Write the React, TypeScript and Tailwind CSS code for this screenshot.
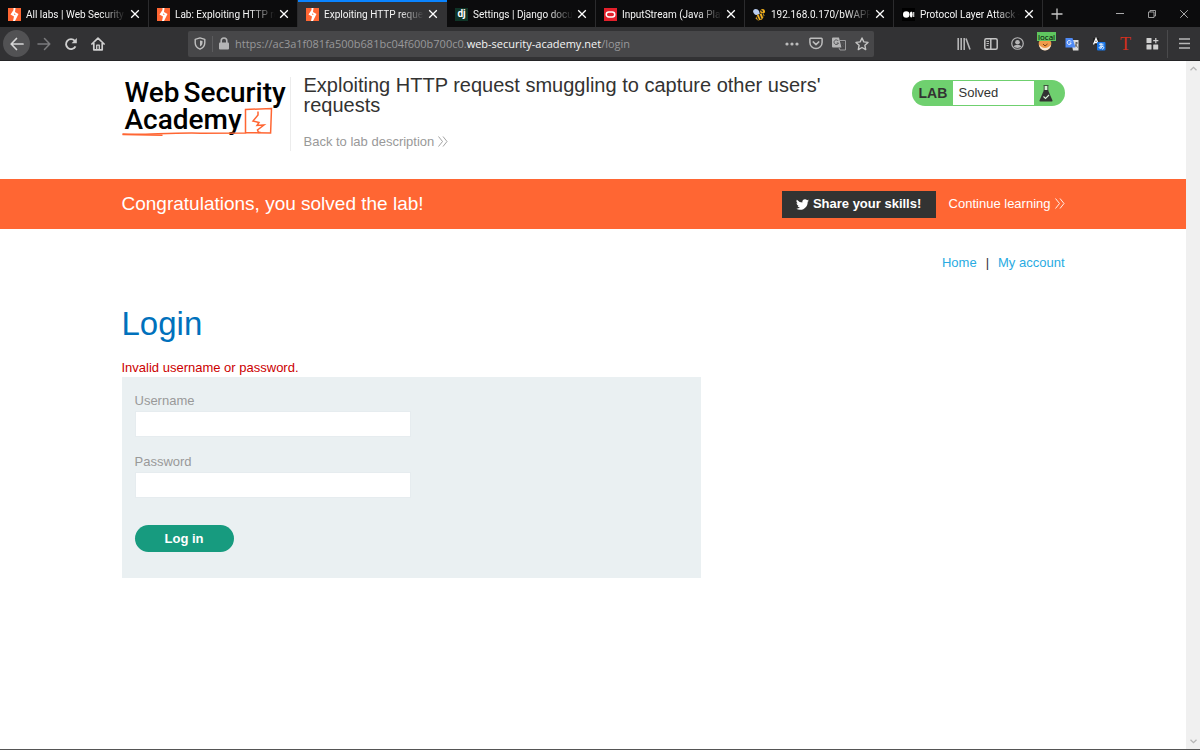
import React from 'react';

const BoltIcon = () => (
  <svg viewBox="0 0 26 26" className="size-[13px] shrink-0" aria-hidden="true">
    <rect width="26" height="26" fill="#ff6633" />
    <path d="M11 0h4l-1 8 7 4-7 14h-4l2-9-7-4 6-9z" fill="#fff" />
    <path d="M12.500 10.500l3 2.500-3 1z" fill="#ff6633" />
  </svg>
);

const DjangoIcon = () => (
  <span className="flex size-[13px] shrink-0 items-center justify-center bg-[#0f3528] text-[10px] leading-none font-bold text-white">dj</span>
);

const OracleIcon = () => (
  <svg viewBox="0 0 26 26" className="size-[13px] shrink-0" aria-hidden="true">
    <rect width="26" height="26" fill="#e3202b" />
    <rect x="4.500" y="8" width="17" height="10" rx="5" fill="none" stroke="#fff" strokeWidth="3" />
  </svg>
);

const BeeIcon = () => (
  <svg viewBox="0 0 26 26" className="size-[13px] shrink-0" aria-hidden="true">
    <path d="M1 4c3-4 9-2 11 2l2 7-8 1C2 13-1 8 1 4z" fill="#b9cdf0" />
    <path d="M16 3c5-3 9 1 8 6l-6 3-4-4z" fill="#f2b01e" />
    <path d="M9 13l11-3 3 5-5 8-8 2-5-4z" fill="#f2b01e" />
    <path d="M12 12l4 10M18 10l3 8M7 16l4 8M17 4l2 4" stroke="#222" strokeWidth="2.500" />
  </svg>
);

const MediumIcon = () => (
  <svg viewBox="0 0 26 26" className="size-[13px] shrink-0" aria-hidden="true">
    <rect width="26" height="26" fill="#000" />
    <circle cx="8.500" cy="13" r="6.500" fill="#fff" />
    <ellipse cx="18.500" cy="13" rx="2.800" ry="6" fill="#fff" />
    <rect x="22.500" y="8" width="2" height="10" fill="#fff" />
  </svg>
);

const tabs = [
  { icon: <BoltIcon />, title: 'All labs | Web Security' },
  { icon: <BoltIcon />, title: 'Lab: Exploiting HTTP re' },
  { icon: <BoltIcon />, title: 'Exploiting HTTP reques', active: true },
  { icon: <DjangoIcon />, title: 'Settings | Django docu' },
  { icon: <OracleIcon />, title: 'InputStream (Java Platf' },
  { icon: <BeeIcon />, title: '192.168.0.170/bWAPP/' },
  { icon: <MediumIcon />, title: 'Protocol Layer Attack -' },
];

function TabBar() {
  return (
    <div className="flex h-[27px] bg-[#0c0c0d] font-[Roboto,sans-serif] text-[10px] text-[#f5f5f5]">
      {tabs.map((tab) => (
        <div
          key={tab.title}
          className={
            tab.active
              ? 'flex w-[149px] items-center border-t-2 border-[#0a84ff] bg-[#323234] pr-[9px] pb-px pl-2'
              : 'flex w-[149px] items-center border-r border-[#2b2b2d] pt-px pr-2 pl-2'
          }
        >
          {tab.icon}
          <span className="ml-[5px] min-w-0 flex-1 overflow-hidden whitespace-nowrap [mask-image:linear-gradient(to_right,black_75%,transparent)]">
            {tab.title}
          </span>
          <button aria-label="Close tab" className="ml-1 shrink-0">
            <svg viewBox="0 0 10 10" className="size-[10px]" stroke="#fff" strokeWidth="1.300">
              <path d="M1.200 1.200l7.600 7.600M8.800 1.200L1.200 8.800" />
            </svg>
          </button>
        </div>
      ))}
      <button aria-label="New tab" className="flex w-7 items-center justify-center">
        <svg viewBox="0 0 12 12" className="size-3" stroke="#c8c8c8" strokeWidth="1.300">
          <path d="M6 0.500v11M0.500 6h11" />
        </svg>
      </button>
      <div className="ml-auto flex">
        <button aria-label="Minimize" className="flex w-8 items-center justify-center">
          <svg viewBox="0 0 8 8" className="size-2" stroke="#aaa"><path d="M0 3.500h8" /></svg>
        </button>
        <button aria-label="Restore" className="flex w-8 items-center justify-center">
          <svg viewBox="0 0 8 8" className="size-2" stroke="#aaa" strokeWidth="0.900" fill="none">
            <path d="M0.500 2h5.500v5.500H0.500zM2 2V0.500h5.500V6H6" />
          </svg>
        </button>
        <button aria-label="Close window" className="flex w-8 items-center justify-center">
          <svg viewBox="0 0 8 8" className="size-2" stroke="#bbb" strokeWidth="0.900"><path d="M0.200 0.200l7.600 7.600M7.800 0.200L0.200 7.800" /></svg>
        </button>
      </div>
    </div>
  );
}

function ToolButton({ label, className = '', children }: { label: string; className?: string; children: React.ReactNode }) {
  return (
    <button aria-label={label} className={`relative flex size-[27px] shrink-0 items-center justify-center rounded-full ${className}`}>
      {children}
    </button>
  );
}

function Toolbar() {
  return (
    <div className="flex h-[34px] items-center border-b border-[#242426] bg-[#323234] pl-[3px]">
      <ToolButton label="Back" className="bg-[#525254]">
        <svg viewBox="0 0 14 14" className="size-[14px]" fill="none" stroke="#d6d6d6" strokeWidth="1.700" strokeLinecap="round" strokeLinejoin="round">
          <path d="M13 7H1.200M6.500 1.500L1.200 7l5.300 5.500" />
        </svg>
      </ToolButton>
      <ToolButton label="Forward">
        <svg viewBox="0 0 14 14" className="size-[14px]" fill="none" stroke="#7b7b7d" strokeWidth="1.500" strokeLinecap="round" strokeLinejoin="round">
          <path d="M1 7h11.800M7.500 1.500L12.800 7l-5.300 5.500" />
        </svg>
      </ToolButton>
      <ToolButton label="Reload">
        <svg viewBox="0 0 14 14" className="size-[14px]" fill="none" stroke="#cfcfcf" strokeWidth="1.900">
          <path d="M11.500 9.300A5 5 0 1 1 10.800 3.800" />
          <path d="M12.800 1v5.200H7.600z" fill="#cfcfcf" stroke="none" />
        </svg>
      </ToolButton>
      <ToolButton label="Home">
        <svg viewBox="0 0 14 14" className="size-[14px]" fill="none" stroke="#cfcfcf" strokeWidth="1.700" strokeLinecap="round" strokeLinejoin="round">
          <path d="M0.900 7L7 1.200 13.100 7M2.800 6v6.800h8.400V6" />
          <path d="M5.700 12.500V8.200h2.600v4.300" strokeWidth="1.300" />
        </svg>
      </ToolButton>

      <div className="ml-[77px] flex h-[26px] min-w-0 flex-1 items-center rounded-xs bg-[#474749]">
        <span className="flex w-6 justify-center">
          <svg viewBox="0 0 12 13" className="h-[13px] w-3" fill="none" stroke="#c0c0c0" strokeWidth="1.400">
            <path d="M6 0.900L10.800 2.300v3.500c0 3-2 5.200-4.800 6.300C3.200 11 1.200 8.800 1.200 5.800V2.300z" strokeLinejoin="round" />
            <path d="M6 3.500v6c1.600-.8 2.500-2 2.500-3.700V4z" fill="#c0c0c0" stroke="none" />
          </svg>
        </span>
        <span className="h-4 w-px bg-[#5c5c5e]" />
        <svg viewBox="0 0 10 13" className="ml-[6px] h-[13px] w-[10px]" aria-hidden="true">
          <rect y="5.500" width="10" height="7" rx="1" fill="#b5b5b6" />
          <path d="M2.200 6V3.800a2.800 2.800 0 0 1 5.600 0V6" fill="none" stroke="#b5b5b6" strokeWidth="1.600" />
        </svg>
        <span className="ml-[6px] min-w-0 flex-1 overflow-hidden pt-[2px] text-[11px] whitespace-nowrap text-[#98989a]">
          https://ac3a1f081fa500b681bc04f600b700c0.<span className="text-[#f5f5f5]">web-security-academy.net</span>/login
        </span>
        <button aria-label="Page actions" className="flex w-6 justify-center">
          <svg viewBox="0 0 14 4" className="h-1 w-[14px]" fill="#bcbcbc"><circle cx="2" cy="2" r="1.600" /><circle cx="7" cy="2" r="1.600" /><circle cx="12" cy="2" r="1.600" /></svg>
        </button>
        <button aria-label="Save to Pocket" className="flex w-[23px] justify-center">
          <svg viewBox="0 0 14 13" className="h-[13px] w-[14px]" fill="none" stroke="#bcbcbc" strokeWidth="1.500" strokeLinecap="round" strokeLinejoin="round">
            <path d="M1.700 1.200h10.600q.8 0 .8.800v3.500a6.100 6.100 0 0 1-12.200 0V2q0-.8.8-.8z" />
            <path d="M4.200 4.900L7 7.600l2.800-2.700" />
          </svg>
        </button>
        <button aria-label="Translate page" className="flex w-[23px] justify-center">
          <svg viewBox="0 0 14 14" className="size-[14px]">
            <path d="M1 0.500h6l2.500 10H1a1 1 0 0 1-1-1v-8a1 1 0 0 1 1-1z" fill="#b5b5b6" />
            <path d="M7.500 3.500h6v9.500H8l-1-2" fill="none" stroke="#9a9a9c" />
            <path d="M6.300 4A2.300 2.300 0 1 0 6.500 6H4.700M9 6h3.500M10.700 5v1M9.300 10c1.500-1 2.300-2.200 2.500-4M9.600 7.500l2.500 2.500" fill="none" stroke="#555557" />
          </svg>
        </button>
        <button aria-label="Bookmark" className="flex w-6 justify-center">
          <svg viewBox="0 0 14 14" className="size-[14px]" fill="none" stroke="#c4c4c4" strokeWidth="1.400" strokeLinejoin="round">
            <path d="M7 1l1.800 3.900 4.200.5-3.100 2.900.8 4.300L7 10.500l-3.700 2.100.8-4.300L1 5.400l4.200-.5z" />
          </svg>
        </button>
      </div>

      <div className="mr-px ml-[76px] flex items-center">
        <ToolButton label="Library">
          <svg viewBox="0 0 14 12" className="h-3 w-[14px]" stroke="#b5b5b6" strokeWidth="1.600"><path d="M1.200 0v12M4.200 0v12M7.200 0v12M9 0.500l4 11" /></svg>
        </ToolButton>
        <ToolButton label="Sidebar">
          <svg viewBox="0 0 14 12" className="h-3 w-[14px]" fill="none" stroke="#c4c4c4" strokeWidth="1.500">
            <rect x="0.800" y="0.800" width="12.400" height="10.400" rx="1.500" /><path d="M6.800 1v10" /><path d="M2.500 3.500h2.500M2.500 5.500h2.500M2.500 7.500h2" strokeWidth="0.900" />
          </svg>
        </ToolButton>
        <ToolButton label="Account">
          <svg viewBox="0 0 14 14" className="size-[13px]" fill="none" stroke="#b5b5b6" strokeWidth="1.300">
            <circle cx="7" cy="7" r="6.200" /><circle cx="7" cy="5.600" r="2.500" fill="#b5b5b6" stroke="none" /><path d="M2.800 10c1.200-2 7.200-2 8.400 0-1.800 2.400-6.600 2.400-8.400 0z" fill="#b5b5b6" stroke="none" />
          </svg>
        </ToolButton>
        <ToolButton label="Proxy">
          <svg viewBox="0 0 14 14" className="size-[14px]">
            <circle cx="7" cy="7" r="6.300" fill="#ef9b4a" /><path d="M1 8c2 1 3 3 6 3s4-2 6-3c-.4 3-3 5.400-6 5.400S1.400 11 1 8z" fill="#f5e6d6" /><path d="M5 7l2 2 2.500-2" stroke="#7a3d12" fill="none" />
          </svg>
          <span className="absolute top-[2px] left-[6px] bg-[#5fc65f] px-px text-[8px] leading-[9px] text-black">local</span>
        </ToolButton>
        <ToolButton label="Google Translate">
          <svg viewBox="0 0 14 14" className="size-[14px]">
            <path d="M6 3h7.500v10.500H8z" fill="#dcdcdc" /><path d="M0.500 1h7l3 9.500h-10z" fill="#4f8af5" />
            <path d="M6 4.500A2 2 0 1 0 6.200 6H4.500" fill="none" stroke="#fff" strokeWidth="0.900" /><path d="M10 6h3M11.500 5v1.500l-1 3M10.500 7.500l2 3" fill="none" stroke="#555" strokeWidth="0.900" />
          </svg>
        </ToolButton>
        <ToolButton label="Text translator">
          <svg viewBox="0 0 14 14" className="size-[14px]">
            <path d="M1 1h6v7H1z" fill="#222" /><path d="M1.500 7.500L4 1.500l2.500 6M2.500 5.500h3" fill="none" stroke="#fff" strokeWidth="1.300" />
            <rect x="5" y="5" width="8.500" height="8.500" rx="1" fill="#1976e8" />
            <path d="M7 7.200h4.500M9 6v5.500M11 8.500c-1 2.700-3.500 3.500-3.800 2.200-.2-1.500 4.300-2.500 4.500-.2 0 1-.8 1.500-1.700 1.600" fill="none" stroke="#fff" strokeWidth="0.900" />
          </svg>
        </ToolButton>
        <ToolButton label="Typography">
          <span className="font-['Liberation_Serif',serif] text-[18px] leading-none text-[#d32f1e]">T</span>
        </ToolButton>
        <ToolButton label="Extensions">
          <svg viewBox="0 0 13 13" className="size-[13px]" fill="#d0d0d0">
            <rect x="0.500" y="1" width="5" height="5" rx="0.500" /><rect x="0.500" y="7.500" width="5" height="5" rx="0.500" /><rect x="7.200" y="7.500" width="5" height="5" rx="0.500" /><path d="M9.200 1h1.200v2h2v1.200h-2v2H9.200v-2h-2V3h2z" />
          </svg>
        </ToolButton>
      </div>
      <span className="h-7 w-px bg-[#4a4a4c]" />
      <button aria-label="Open menu" className="flex w-8 items-center justify-center">
        <svg viewBox="0 0 11 11" className="size-[11px]" stroke="#b8b8b8" strokeWidth="1.400"><path d="M0 1h11M0 5.500h11M0 10h11" /></svg>
      </button>
    </div>
  );
}

const DoubleChevron = () => (
  <svg viewBox="0 0 10 11" className="mb-px h-[11px] w-[10px]" fill="none" stroke="currentColor" strokeWidth="0.900" aria-hidden="true">
    <path d="M0.500 0.500l4 5-4 5M5 0.500l4 5-4 5" />
  </svg>
);

function Logo() {
  return (
    <a href="#" className="relative block h-[74px] w-[169px] shrink-0 border-r border-[#ececec] pt-[2px] pl-[3px] font-[Roboto,sans-serif] text-[28px] leading-[27px] font-medium text-black">
      <span className="flex gap-1"><span>Web</span><span>Security</span></span>
      <span className="block">Academy</span>
      <svg viewBox="0 0 168 64" className="absolute top-0 left-0 h-16 w-[168px]" fill="none" stroke="#ff6633" strokeWidth="1.500" aria-hidden="true">
        <path d="M0.500 57c20 1.500 45-1.500 78-.8l45-.3V32.500l26-1-.9 24.500-25-.5" />
        <path d="M0.500 57.500l40 .7" />
        <path d="M136 34.500v3.500l-5 6 6 1.500-2 3 7-.5-6.500 5 1 2.500 2-.3" />
      </svg>
    </a>
  );
}

function Field({ id, label, type }: { id: string; label: string; type: string }) {
  return (
    <div className="mb-4">
      <label htmlFor={id} className="block pb-[2px] leading-[17px] text-[#999]">{label}</label>
      <input id={id} type={type} className="block h-[26px] w-[276px] max-w-full border border-[#e6ecef] bg-white px-2 outline-none" />
    </div>
  );
}

function LabPage() {
  return (
    <main className="min-w-0 flex-1 bg-white text-[13px] text-[#333332]">
      <header className="mx-auto flex h-[118px] max-w-[943px] items-start pt-4">
        <Logo />
        <div className="w-[560px] pl-[13px]">
          <h2 className="-mt-[2px] text-[20px] leading-5">Exploiting HTTP request smuggling to capture other users' requests</h2>
          <a href="#" className="mt-[19px] flex items-center gap-1 leading-4 text-[#999]">Back to lab description<DoubleChevron /></a>
        </div>
        <div className="mt-[3px] ml-auto flex h-[26px] w-[153px] items-center overflow-hidden rounded-full bg-[#6fd06f]">
          <span className="w-[41px] pl-[7px] text-[14px] font-bold">LAB</span>
          <span className="flex h-6 flex-1 items-center bg-white pl-[6px]">Solved</span>
          <span className="w-[31px] pl-[5px]">
            <svg viewBox="0 0 14 17" className="h-[17px] w-[14px]" aria-hidden="true">
              <path d="M4.500 0.500h5M5.200 1v5h3.600V1" fill="#d8f3d8" stroke="#333332" strokeWidth="0.800" />
              <path d="M5 5h4l4.500 10.500q.3 1-.8 1H1.300q-1.100 0-.8-1z" fill="#333332" />
              <path d="M4.500 11.500L6.500 13.500l3.500-3.500" fill="none" stroke="#d8f3d8" strokeWidth="1.100" />
            </svg>
          </span>
        </div>
      </header>

      <section className="bg-[#ff6633] text-white">
        <div className="mx-auto flex h-[50px] max-w-[943px] items-center">
          <p className="text-[19px]">Congratulations, you solved the lab!</p>
          <button className="ml-auto flex h-[27px] w-[154px] items-center justify-center gap-1 bg-[#333332] font-bold">
            <svg viewBox="0 0 24 24" className="size-[13px]" fill="#fff" aria-hidden="true">
              <path d="M23.950 4.570a10 10 0 0 1-2.820.770 4.960 4.960 0 0 0 2.160-2.720 9.900 9.900 0 0 1-3.120 1.180 4.920 4.920 0 0 0-8.380 4.480A13.930 13.930 0 0 1 1.640 3.160a4.920 4.920 0 0 0 1.520 6.570 4.900 4.900 0 0 1-2.230-.610v.060a4.920 4.920 0 0 0 3.950 4.830 5 5 0 0 1-2.210.080 4.940 4.940 0 0 0 4.600 3.420A9.870 9.870 0 0 1 0 19.540a13.990 13.990 0 0 0 7.550 2.210c9.050 0 14-7.500 14-13.980 0-.210 0-.420-.020-.630a9.940 9.940 0 0 0 2.460-2.550z" />
            </svg>
            Share your skills!
          </button>
          <a href="#" className="ml-[13px] flex items-center gap-1">Continue learning<DoubleChevron /></a>
        </div>
      </section>

      <div className="mx-auto max-w-[943px] pt-[25px]">
        <nav className="flex justify-end gap-[9px] leading-[17px]">
          <a href="#" className="text-[#29abe2]">Home</a>
          <span>|</span>
          <a href="#" className="text-[#29abe2]">My account</a>
        </nav>
        <h1 className="mt-[33px] text-[33px] leading-10 text-[#0071bc]">Login</h1>
        <p className="mt-[15px] leading-[18px] text-[#cc0000]">Invalid username or password.</p>
        <form className="max-w-[579px] bg-[#eaf0f2] px-[13px] pt-[15px] pb-[26px]" onSubmit={(e) => e.preventDefault()}>
          <Field id="username" label="Username" type="text" />
          <Field id="password" label="Password" type="password" />
          <button type="submit" className="mt-[27px] block h-[27px] w-[99px] rounded-full bg-[#179b7f] font-bold text-white">Log in</button>
        </form>
      </div>
    </main>
  );
}

export default function App() {
  return (
    <div className="flex min-h-screen flex-col border-b border-[#555] bg-white font-['Open_Sans',sans-serif]">
      <TabBar />
      <Toolbar />
      <div className="flex flex-1 font-['Liberation_Sans',sans-serif]">
        <LabPage />
        <div className="flex w-[14px] shrink-0 flex-col items-center justify-between bg-[#f0f0f0] py-[5px]">
          <svg viewBox="0 0 7 5" className="h-[5px] w-[7px]" fill="none" stroke="#b5b5b5" strokeWidth="1.300"><path d="M0.500 4.300l3-3 3 3" /></svg>
          <svg viewBox="0 0 7 5" className="h-[5px] w-[7px]" fill="none" stroke="#b5b5b5" strokeWidth="1.300"><path d="M0.500 0.700l3 3 3-3" /></svg>
        </div>
      </div>
    </div>
  );
}
